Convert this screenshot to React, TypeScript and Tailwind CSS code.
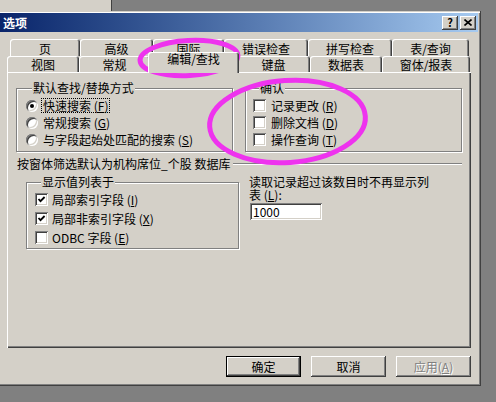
import type { ReactNode } from "react";

const raised =
  "shadow-[inset_-1px_-1px_#404040,inset_1px_1px_#fff,inset_-2px_-2px_#808080,inset_2px_2px_#d4d0c8]";
const sunken =
  "shadow-[inset_1px_1px_#808080,inset_-1px_-1px_#fff,inset_2px_2px_#404040,inset_-2px_-2px_#d4d0c8]";

const backTabs = [
  { label: "页", w: "w-[70px]" },
  { label: "高级", w: "w-[73px]" },
  { label: "国际", w: "w-[71px]" },
  { label: "错误检查", w: "w-[84px]" },
  { label: "拼写检查", w: "w-[84px]" },
  { label: "表/查询", w: "w-[77px]" },
];

const frontTabs = [
  { label: "视图", w: "w-[72px]" },
  { label: "常规", w: "w-[71px]" },
  { label: "编辑/查找", w: "w-[91px]", active: true },
  { label: "键盘", w: "w-[73px]" },
  { label: "数据表", w: "w-[72px]" },
  { label: "窗体/报表", w: "w-[88px]" },
];

function Key({ k }: { k: string }) {
  return (
    <span>
      {" "}(<span className="underline">{k}</span>)
    </span>
  );
}

function Group({ title, className, children }: { title: string; className: string; children: ReactNode }) {
  return (
    <fieldset className={`border border-[#808080] shadow-[inset_1px_1px_#fff,1px_1px_#fff] ${className}`}>
      <legend className="ml-[6px] px-[1px] bg-[#d4d0c8] leading-[14px]">{title}</legend>
      {children}
    </fieldset>
  );
}

function Check({ checked }: { checked?: boolean }) {
  return (
    <span className={`flex h-[13px] w-[13px] shrink-0 items-center justify-center bg-white ${sunken}`}>
      {checked ? (
        <svg width="9" height="9" viewBox="0 0 9 9">
          <path d="M1.5 4 L3.5 6.2 L7.6 2" stroke="#000" strokeWidth="1.8" fill="none" />
        </svg>
      ) : null}
    </span>
  );
}

function Radio({ on }: { on?: boolean }) {
  return (
    <span className={`flex h-[12px] w-[12px] shrink-0 items-center justify-center rounded-full bg-white ${sunken}`}>
      {on ? <span className="h-[4px] w-[4px] rounded-full bg-black" /> : null}
    </span>
  );
}

export default function App() {
  return (
    <div className="relative h-[402px] w-[496px] overflow-hidden bg-[#808080] font-['Noto_Sans_CJK_SC',sans-serif] text-[12px] leading-[14px] text-black">
      <div className="flex h-[11px]">
        <div className="w-[112px] border-r border-[#404040] bg-[#d4d0c8]" />
      </div>

      <div className="h-[375px] w-[481px] bg-[#d4d0c8] pt-[2px] shadow-[inset_-1px_-1px_#404040,inset_0_1px_#d4d0c8,inset_0_2px_#fff,inset_-2px_-2px_#808080]">
        {/* title bar */}
        <div className="mr-[3px] flex h-[19px] items-center justify-between bg-linear-to-r from-[#0a246a] to-[#a6caf0] pl-[3px] pr-[2px]">
          <span className="font-bold text-white">选项</span>
          <div className="flex gap-[2px]">
            <span className={`flex h-[14px] w-[16px] items-center justify-center bg-[#d4d0c8] text-[11px] font-bold leading-none ${raised}`}>
              ?
            </span>
            <span className={`flex h-[14px] w-[16px] items-center justify-center bg-[#d4d0c8] ${raised}`}>
              <svg width="8" height="7" viewBox="0 0 8 7">
                <path d="M0.5 0.5 L7.5 6.5 M7.5 0.5 L0.5 6.5" stroke="#000" strokeWidth="1.6" />
              </svg>
            </span>
          </div>
        </div>

        <div className="mt-[7px] px-[7px]">
          {/* tabs */}
          <div className="ml-[3px] flex">
            {backTabs.map((t) => (
              <div
                key={t.label}
                className={`${t.w} h-[17px] rounded-t-[3px] pt-[3px] text-center shadow-[inset_1px_1px_#fff,inset_-1px_0_#404040,inset_-2px_0_#808080]`}
              >
                {t.label}
              </div>
            ))}
          </div>
          <div className="flex h-[16px] items-end">
            {frontTabs.map((t) =>
              t.active ? (
                <div
                  key={t.label}
                  className={`${t.w} relative z-10 -mx-[2px] -mb-[1px] h-[21px] rounded-t-[3px] bg-[#d4d0c8] text-center shadow-[inset_1px_1px_#fff,inset_-1px_0_#404040,inset_-2px_0_#808080]`}
                >
                  {t.label}
                </div>
              ) : (
                <div
                  key={t.label}
                  className={`${t.w} h-[16px] self-start rounded-t-[3px] pt-[2px] text-center shadow-[inset_1px_1px_#fff,inset_-1px_0_#404040,inset_-2px_0_#808080]`}
                >
                  {t.label}
                </div>
              )
            )}
          </div>

          {/* panel */}
          <div className="h-[276px] w-[464px] bg-[#d4d0c8] px-[9px] pt-[9px] shadow-[inset_1px_1px_#fff,inset_-1px_-1px_#404040,inset_-2px_-2px_#808080]">
            <div className="flex gap-[12px]">
              <Group title="默认查找/替换方式" className="w-[217px] pb-[3px] pl-[9px] pt-[2px]">
                <div className="flex h-[17px] items-center gap-[3px]">
                  <Radio on />
                  <span className="border border-dotted border-black px-[1px] leading-[13px]">
                    快速搜索<Key k="F" />
                  </span>
                </div>
                <div className="flex h-[17px] items-center gap-[5px]">
                  <Radio />
                  <span>
                    常规搜索<Key k="G" />
                  </span>
                </div>
                <div className="flex h-[17px] items-center gap-[5px]">
                  <Radio />
                  <span>
                    与字段起始处匹配的搜索<Key k="S" />
                  </span>
                </div>
              </Group>
              <Group title="确认" className="w-[217px] pb-[3px] pl-[7px] pt-[2px]">
                {[
                  ["记录更改", "R"],
                  ["删除文档", "D"],
                  ["操作查询", "T"],
                ].map(([label, k]) => (
                  <div key={label} className="flex h-[17px] items-center gap-[5px]">
                    <Check />
                    <span>
                      {label}
                      <Key k={k} />
                    </span>
                  </div>
                ))}
              </Group>
            </div>

            <div className="mt-[5px] flex h-[14px] items-center gap-[3px]">
              <span className="ml-[1px] whitespace-nowrap">按窗体筛选默认为机构席位_个股 数据库</span>
              <span className="h-[2px] flex-1 border-t border-b border-t-[#808080] border-b-white" />
            </div>

            <div className="mt-[4px] flex">
              <Group title="显示值列表于" className="ml-[10px] w-[213px] pb-[1px] pl-[8px] pt-[1px]">
                {[
                  ["局部索引字段", "I", true],
                  ["局部非索引字段", "X", true],
                  ["ODBC 字段", "E", false],
                ].map(([label, k, c]) => (
                  <div key={label as string} className="flex h-[19px] items-center gap-[4px]">
                    <Check checked={c as boolean} />
                    <span>
                      {label}
                      <Key k={k as string} />
                    </span>
                  </div>
                ))}
              </Group>
              <div className="ml-[10px]">
                <p className="leading-[13px]">读取记录超过该数目时不再显示列</p>
                <p className="leading-[14px]">
                  表<Key k="L" />:
                </p>
                <div className={`ml-[1px] mt-[1px] flex h-[17px] w-[72px] items-center bg-white pl-[3px] ${sunken}`}>
                  1000
                </div>
              </div>
            </div>
          </div>

          {/* buttons */}
          <div className="mt-[8px] flex w-[464px] justify-end gap-[10px]">
            <button className="flex h-[21px] w-[75px] items-center justify-center border border-black bg-[#d4d0c8] shadow-[inset_-1px_-1px_#404040,inset_1px_1px_#fff,inset_-2px_-2px_#808080]">
              确定
            </button>
            <button className={`flex h-[21px] w-[75px] items-center justify-center bg-[#d4d0c8] ${raised}`}>取消</button>
            <button
              className={`flex h-[21px] w-[75px] items-center justify-center bg-[#d4d0c8] text-[#808080] [text-shadow:1px_1px_0_#fff] ${raised}`}
            >
              应用<Key k="A" />
            </button>
          </div>
        </div>
      </div>

      {/* magenta annotation marks */}
      <svg className="pointer-events-none absolute inset-0" width="496" height="402">
        <ellipse cx="189" cy="58" rx="49" ry="17.5" transform="rotate(-3 189 58)" fill="none" stroke="#ee33ee" strokeWidth="5" />
        <ellipse cx="287.5" cy="121.5" rx="78" ry="41" transform="rotate(-4 287.5 121.5)" fill="none" stroke="#ee33ee" strokeWidth="5" />
      </svg>
    </div>
  );
}
